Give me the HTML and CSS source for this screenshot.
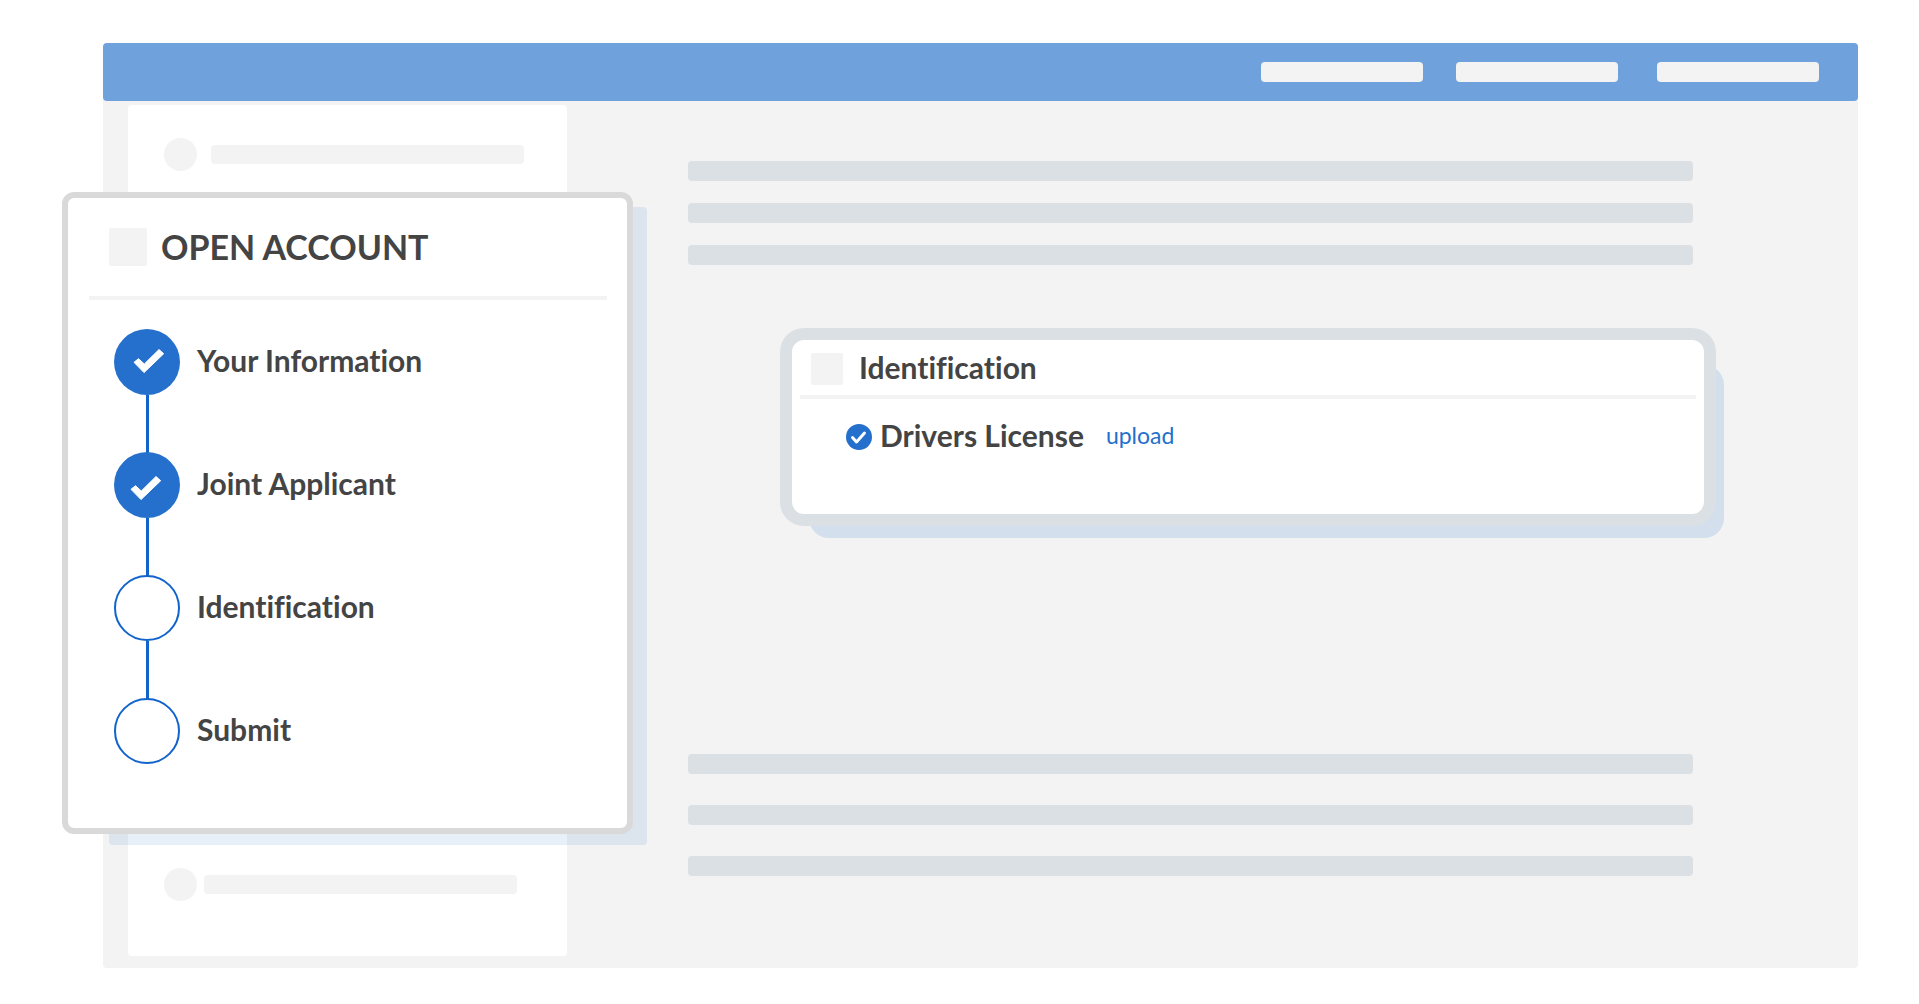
FILE: index.html
```html
<!DOCTYPE html>
<html lang="en">

<head>
    <meta charset="UTF-8">
    <meta name="viewport" content="width=device-width, initial-scale=1.0">
    <title>Open Account</title>
    <link rel="stylesheet" href="styles.css">
</head>

<body>
    <div class="window">
        <header class="topbar">
            <span class="topbar-item"></span>
            <span class="topbar-item"></span>
            <span class="topbar-item last"></span>
        </header>

        <div class="workspace">
            <aside class="sidebar">
                <div class="sidebar-row">
                    <span class="dot"></span>
                    <span class="line"></span>
                </div>
                <div class="sidebar-row tight">
                    <span class="dot"></span>
                    <span class="line"></span>
                </div>
            </aside>

            <main class="content">
                <div class="text-lines">
                    <span class="text-line"></span>
                    <span class="text-line"></span>
                    <span class="text-line"></span>
                </div>

                <section class="id-card">
                    <div class="id-header">
                        <span class="id-icon"></span>
                        <h2>Identification</h2>
                    </div>
                    <div class="id-row">
                        <svg class="id-check" viewBox="0 0 26 26" aria-hidden="true">
                            <circle cx="13" cy="13" r="13" />
                            <path d="M6.5 13.5 L10.5 18 L18.5 9" />
                        </svg>
                        <h3>Drivers License</h3>
                        <a href="#upload">upload</a>
                    </div>
                </section>

                <div class="text-lines bottom">
                    <span class="text-line"></span>
                    <span class="text-line"></span>
                    <span class="text-line"></span>
                </div>
            </main>
        </div>

        <!-- steps card, sits over the sidebar -->
        <div class="account">
            <section class="account-card">
                <div class="account-header">
                    <span class="account-icon"></span>
                    <h1>OPEN ACCOUNT</h1>
                </div>
                <ol class="steps">
                    <li class="step done">
                        <svg class="marker" viewBox="0 0 66 66" aria-hidden="true">
                            <path d="M20 33.3 L24.5 29.7 L30.3 35 L45 20.5 L49.7 24.7 L30 43.6 Z" />
                        </svg>
                        <span class="step-name">Your Information</span>
                    </li>
                    <li class="step done">
                        <svg class="marker" viewBox="0 0 66 66" aria-hidden="true">
                            <path d="M17 37.3 L21.5 33.7 L27.3 39 L42 24.5 L46.7 28.7 L27 47.6 Z" />
                        </svg>
                        <span class="step-name">Joint Applicant</span>
                    </li>
                    <li class="step">
                        <span class="marker"></span>
                        <span class="step-name">Identification</span>
                    </li>
                    <li class="step">
                        <span class="marker"></span>
                        <span class="step-name">Submit</span>
                    </li>
                </ol>
            </section>
        </div>
    </div>
</body>

</html>
```
FILE: styles.css
```css
:root {
    --blue: #2470cc;
    --line-blue: #1264cc;
    --bar-blue: #6fa1dc;
    --light: #f3f3f3;
    --grey: #dbe0e4;
    --text: #444444;
}

* {
    margin: 0;
    padding: 0;
    box-sizing: border-box;
}

body {
    min-height: 100vh;
    padding: 43px 61px 36px 103px;
    background-color: #ffffff;
    color: var(--text);
    font-family: Lato, sans-serif;
    font-variant-ligatures: none;
    display: flex;
}

.window {
    position: relative;
    flex: 1;
    display: flex;
    flex-direction: column;
    background-color: var(--light);
    border-radius: 4px;
}

/* top bar */
.topbar {
    display: flex;
    justify-content: flex-end;
    align-items: center;
    gap: 33px;
    height: 58px;
    padding-right: 39px;
    background-color: var(--bar-blue);
    border-radius: 4px;
}

.topbar-item {
    width: 162px;
    height: 20px;
    background-color: var(--light);
    border-radius: 4px;
}

.topbar-item.last {
    margin-left: 6px;
}

.workspace {
    flex: 1;
    display: flex;
}

/* sidebar behind the steps card */
.sidebar {
    width: 439px;
    margin: 4px 0 12px 25px;
    padding: 33px 36px 55px;
    display: flex;
    flex-direction: column;
    justify-content: space-between;
    background-color: #ffffff;
    border-radius: 4px;
}

.sidebar-row {
    display: flex;
    align-items: center;
    gap: 14px;
}

.sidebar-row.tight {
    gap: 7px;
}

.dot {
    width: 33px;
    height: 33px;
    background-color: var(--light);
    border-radius: 50%;
}

.line {
    width: 313px;
    height: 19px;
    background-color: var(--light);
    border-radius: 4px;
}

/* main area */
.content {
    position: relative;
    z-index: 0;
    flex: 1;
    display: flex;
    flex-direction: column;
    padding: 60px 165px 92px 121px;
}

.text-lines {
    display: flex;
    flex-direction: column;
    gap: 22px;
}

.text-lines.bottom {
    gap: 31px;
    margin-top: auto;
}

.text-line {
    height: 20px;
    background-color: var(--grey);
    border-radius: 4px;
}

.id-card {
    position: relative;
    min-height: 198px;
    margin: 63px -23px 0 92px;
    padding: 11px 8px;
    background-color: #ffffff;
    border: 12px solid var(--grey);
    border-radius: 24px;
}

.id-card::before {
    content: "";
    position: absolute;
    top: 25px;
    right: -20px;
    bottom: -24px;
    left: 17px;
    z-index: -1;
    background-color: #d4dfed;
    border-radius: 20px;
}

.id-header {
    display: flex;
    align-items: center;
    gap: 16px;
    padding: 0 11px 8px;
    border-bottom: 4px solid var(--light);
}

.id-icon {
    width: 32px;
    height: 32px;
    background-color: var(--light);
    border-radius: 2px;
}

h2,
h3,
.step-name {
    padding-bottom: 4px;
    font-size: 30px;
    line-height: 32px;
    font-weight: 700;
}

.id-row {
    display: flex;
    align-items: center;
    gap: 8px;
    padding: 20px 46px;
}

.id-check {
    width: 26px;
    height: 26px;
}

.id-check circle {
    fill: var(--blue);
}

.id-check path {
    fill: none;
    stroke: #ffffff;
    stroke-width: 3;
    stroke-linecap: round;
    stroke-linejoin: round;
}

.id-row a {
    margin-left: 14px;
    padding-bottom: 4px;
    color: var(--blue);
    font-size: 23px;
    line-height: 32px;
    text-decoration: none;
}

/* steps card */
.account {
    position: absolute;
    top: 149px;
    left: -41px;
    width: 571px;
    z-index: 1;
}

/* offset shadow behind the card */
.account::before {
    content: "";
    position: absolute;
    top: 15px;
    right: -14px;
    bottom: -11px;
    left: 47px;
    z-index: -1;
    background-color: rgba(36, 112, 204, 0.11);
    border-radius: 4px;
}

.account-card {
    min-height: 642px;
    padding: 30px 20px 60px 21px;
    background-color: #ffffff;
    border: 6px solid #dad9d9;
    border-radius: 12px;
}

.account-header {
    display: flex;
    align-items: center;
    gap: 14px;
    padding: 0 20px 30px;
    border-bottom: 4px solid var(--light);
}

.account-icon {
    width: 38px;
    height: 38px;
    background-color: var(--light);
    border-radius: 2px;
}

h1 {
    font-size: 34px;
    line-height: 38px;
    font-weight: 700;
}

.steps {
    list-style: none;
    padding: 29px 25px 0;
}

.step {
    position: relative;
    display: flex;
    align-items: center;
    gap: 17px;
    height: 66px;
    margin-bottom: 57px;
}

.step:last-child {
    margin-bottom: 0;
}

/* connector to the next step */
.step:not(:last-child)::after {
    content: "";
    position: absolute;
    top: 100%;
    left: 32px;
    width: 3px;
    height: 58px;
    background-color: var(--line-blue);
}

.marker {
    width: 66px;
    height: 66px;
    border: 2px solid var(--line-blue);
    border-radius: 50%;
}

.step.done .marker {
    border: none;
    background-color: var(--blue);
}

.marker path {
    fill: #ffffff;
    stroke: #ffffff;
    stroke-width: 1;
    stroke-linejoin: round;
}
```
